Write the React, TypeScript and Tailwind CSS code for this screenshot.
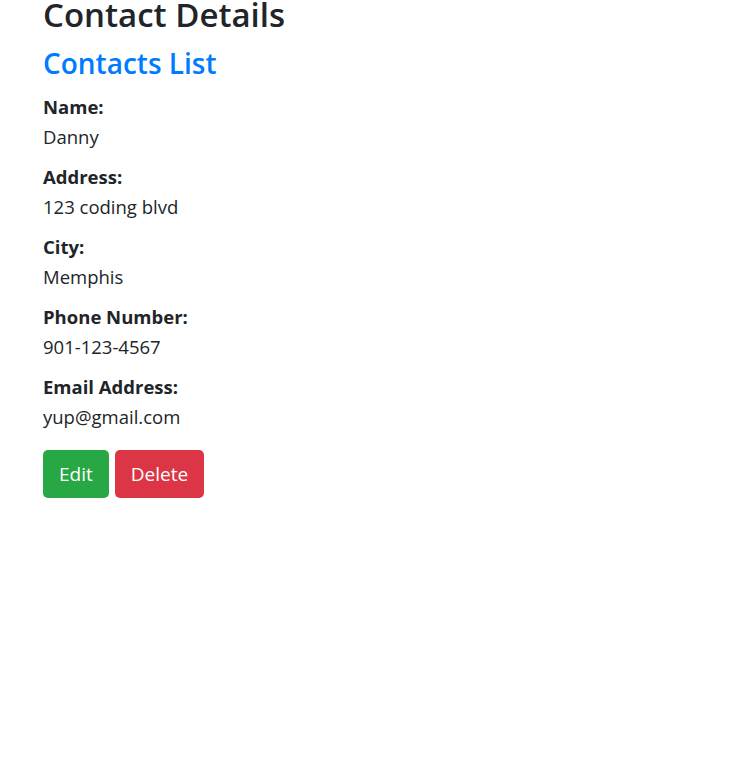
const FIELDS = [
  { label: 'Name:', value: 'Danny' },
  { label: 'Address:', value: '123 coding blvd' },
  { label: 'City:', value: 'Memphis' },
  { label: 'Phone Number:', value: '901-123-4567' },
  { label: 'Email Address:', value: 'yup@gmail.com' }
];

const App = () => {
  return (
    <div className="min-h-[780px] bg-white pl-[43px] text-[18.5px] leading-[27px] text-[#212529] font-['Open_Sans',sans-serif]">
      <h2 className="text-[33px] leading-[30px] font-semibold">Contact Details</h2>
      <h3 className="mt-[16px] text-[28px] leading-[34px] font-semibold text-[#007bff]">
        Contacts List
      </h3>
      <div className="mt-[13px]">
        {FIELDS.map((f) => (
          <div key={f.label} className="mb-[13px]">
            <div className="font-bold mb-[3px]">{f.label}</div>
            <div>{f.value}</div>
          </div>
        ))}
      </div>
      <div className="flex gap-[6px] mt-[20px]">
        <button className="h-[48px] px-4 rounded-[5px] bg-[#28a745] text-white text-[19px]">
          Edit
        </button>
        <button className="h-[48px] px-4 rounded-[5px] bg-[#dc3545] text-white text-[19px]">
          Delete
        </button>
      </div>
    </div>
  );
};

export default App;
